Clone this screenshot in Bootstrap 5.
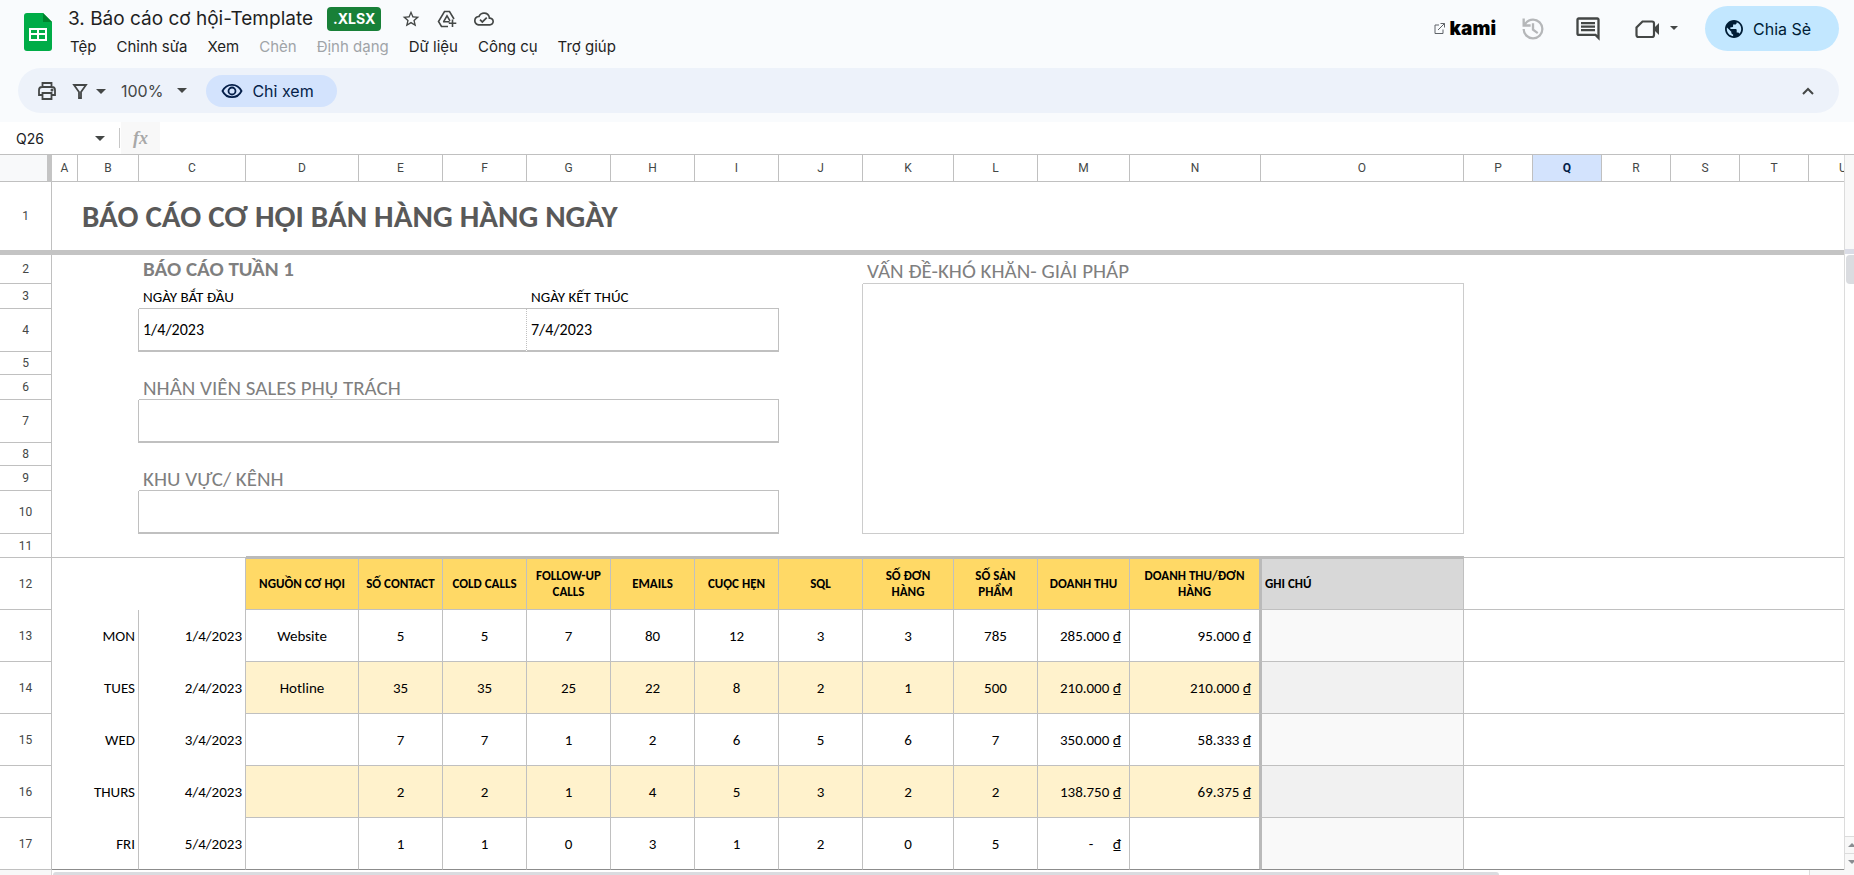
<!DOCTYPE html>
<html lang="vi">
<head>
<meta charset="utf-8">
<meta name="viewport" content="width=device-width, initial-scale=1">
<title>3. Báo cáo cơ hội-Template</title>
<link href="https://cdn.jsdelivr.net/npm/bootstrap@5.3.0/dist/css/bootstrap.min.css" rel="stylesheet">
<style>
  :root { --line: #c0c0c0; --icon: #444746; }
  body { font-family: Inter, "Open Sans", sans-serif; font-size: 15px; background: #f9fbfd; color: #1f1f1f; }
  svg { display: block; flex: none; }
  button { background: none; border: 0; padding: 0; color: inherit; }

  /* Title bar */
  .appbar { height: 60px; padding: 6px 15px 0 24px; }
  .doc-logo { margin: 7px 16px 0 0; }
  .doc-title { font-size: 19px; line-height: 24px; }
  .ext-badge { background: #188038; color: #fff; font-size: 14px; font-weight: 700; line-height: 24px; height: 24px; padding: 0 6px; border-radius: 4px; margin: 1px 20px 0 14px; }
  .menus { gap: 20px; padding-left: 2px; line-height: 20px; margin-top: 6px; }
  .menus button:disabled { color: #a0a4a8; }
  .head-tools { gap: 28px; }
  .kami-link { color: #000; font-size: 19px; font-weight: 900; line-height: 20px; gap: 5px; margin-right: -4px; }
  .share-btn { height: 45px; width: 134px; border-radius: 23px; background: #c2e7ff; color: #001d35; gap: 10px; font-size: 16px; padding-left: 20px; margin-left: -3px; }

  /* Toolbar */
  .toolbar { height: 45px; margin: 8px 15px 0 18px; padding: 0 24px 0 19px; border-radius: 23px; background: #edf2fa; color: var(--icon); }
  .filter-btn, .zoom-btn { margin-left: 15px; }
  .zoom-btn { font-size: 16px; gap: 14px; }
  .view-pill { height: 32px; width: 131px; border-radius: 16px; background: #d3e3fd; color: #041e49; font-size: 16px; gap: 9px; padding-left: 15px; margin-left: 19px; }
  .fx-row { height: 32px; margin-top: 9px; background: #fff; }
  .name-box { width: 119px; padding: 0 14px 0 16px; }
  .name-box input { width: 60px; border: 0; padding: 0; font-size: 14px; color: #202124; background: none; }
  .fx-mark { width: 40px; background: #f8f8f8; border-left: 1px solid #fff; color: #a8a8a8; font: italic 700 18px "Liberation Serif", serif; }
  .fx-sep { width: 1px; height: 20px; background: #c7c7c7; }
  .fx-input { border: 0; background: #fff; min-width: 0; }

  /* Sheet */
  .sheet-area { border-top: 1px solid var(--line); background: #fff; min-height: 0; }
  .grid { width: 100%; table-layout: fixed; border-collapse: separate; border-spacing: 0; font-family: Carlito, Calibri, Lato, sans-serif; font-size: 15px; line-height: 18px; color: #000; }
  .grid th, .grid td { padding: 0; border: 0 solid var(--line); vertical-align: middle; white-space: nowrap; }
  .grid thead th, .grid .rn { font: 400 12px/14px Roboto, "Liberation Sans", sans-serif; color: #444746; text-align: center; border-width: 0 1px 1px 0; }
  .grid thead th.corner { background: #f8f9fa; border-right: 5px solid #c4c4c4; }
  .grid thead th.picked { background: #d3e3fd; color: #041e49; font-weight: 700; }
  .grid thead th.cut { text-align: left; padding-left: 30px; overflow: hidden; border-right: 0; }
  .grid .freeze td { height: 5px; background: #c4c4c4; }
  .grid .r1 .rn { border-bottom: 0; }
  .grid .sheet-title { font-size: 31px; line-height: 36px; font-weight: 700; color: #595959; padding-left: 4px; }
  .grid .sec { font-size: 21px; line-height: 22px; color: #7f7f7f; padding-left: 4px; vertical-align: bottom; }
  .grid .high { line-height: 24px; }
  .grid .wk { font-weight: 700; vertical-align: top; line-height: 28px; }
  .grid .lbl { padding-left: 4px; vertical-align: bottom; line-height: 22px; }
  .grid .rb { border-right-width: 1px; }
  .grid .bb { border-bottom-width: 1px; }
  .grid .box { border-right-width: 1px; border-bottom-width: 2px; padding-left: 4px; font-size: 16px; }
  .grid .box.dash { border-right-style: dotted; }
  .grid .notes { border-color: #cccccc; border-width: 0 1px 1px 0; }
  .grid .lite { border-color: #cccccc; }
  .grid .cap3 { border-bottom: 2px solid #bababa; }
  .grid .r12 .hd { background: #ffd966; font-size: 13px; line-height: 16px; font-weight: 700; text-align: center; border-width: 1px 1px 1px 0; border-top-color: #bababa; white-space: normal; }
  .grid .r12 .note-hd { background: #d8d8d8; text-align: left; padding-left: 3px; }
  .grid .day td { text-align: center; border-bottom-width: 1px; border-right-width: 1px; }
  .grid .day td.d, .grid .day td.dt { text-align: right; padding-right: 3px; border-bottom-width: 0; }
  .grid .day td.m { text-align: right; padding-right: 8px; }
  .grid .day td.nt { background: #f9f9f9; border-left: 1px solid #bababa; }
  .grid .alt td { background: #fff2cc; }
  .grid .alt td.d, .grid .alt td.dt, .grid .alt td.rest { background: #fff; }
  .grid .day.alt td.nt { background: #f1f1f1; }
  .grid td.rest, .grid .day td.rest { border-right: 0; border-bottom-width: 1px; }
  .grid .r12 .hd.thick, .grid .day td.thick { border-right: 2px solid #bababa; }
  .grid .r12 .hd.note-hd { border-left: 1px solid #bababa; background: #d8d8d8; text-align: left; padding-left: 3px; }
  .grid .last td, .grid .day.last td.d, .grid .day.last td.dt { border-bottom: 1px solid #8c8c8c; }
  .h23 { height: 23px; } .h24 { height: 24px; } .h25 { height: 25px; } .h27 { height: 27px; }
  .h29 { height: 29px; } .h43 { height: 43px; } .h52 { height: 52px; } .h68 { height: 68px; }

  /* Scroll bars */
  .vscroll { width: 10px; border-left: 1px solid #dcdcdc; background: #fff; }
  .vscroll .top-pad { height: 94px; background: #f8f8f8; }
  .vscroll .grip { height: 5px; background: #dadce6; }
  .vscroll .thumb { height: 29px; margin: 1px 0 0 1px; border-radius: 4px 0 0 4px; background: #dadce0; }
  .vscroll button { height: 17px; border-top: 1px solid #dcdcdc; background: #f8f8f8; padding-left: 3px; }
  .hscroll { height: 5px; background: #fff; }
  .hscroll .pad { width: 52px; background: #f8f8f8; border-right: 1px solid #d9d9d9; }
  .hscroll .thumb { width: 78%; height: 3px; margin: 2px 0 0 1px; border-radius: 4px 4px 0 0; background: #dadce0; }
  .hscroll .ends { width: 45px; border-left: 1px solid #dcdcdc; background: #f8f8f8; }
</style>
</head>
<body class="vh-100 d-flex flex-column overflow-hidden">

<header class="appbar d-flex flex-shrink-0">
  <svg class="doc-logo" width="28" height="38" viewBox="0 0 28 38" aria-hidden="true">
    <path d="M3 0h16l9 9v26a3 3 0 0 1-3 3H3a3 3 0 0 1-3-3V3a3 3 0 0 1 3-3z" fill="#00ac47"/>
    <path d="M19 0l9 9h-9z" fill="#00832d"/>
    <path d="M5 15h18v13H5zM7 17v3h6v-3zM15 17v3h6v-3zM7 22v4h6v-4zM15 22v4h6v-4z" fill="#fff" fill-rule="evenodd"/>
  </svg>
  <div class="d-flex flex-column">
    <div class="d-flex align-items-center">
      <span class="doc-title">3. Báo cáo cơ hội-Template</span>
      <span class="ext-badge">.XLSX</span>
      <button type="button" aria-label="Gắn dấu sao"><svg width="20" height="20" viewBox="0 0 24 24" fill="#444746"><path d="M22 9.240l-7.190-.620L12 2 9.190 8.630 2 9.240l5.460 4.730L5.820 21 12 17.270 18.180 21l-1.630-7.030L22 9.240zM12 15.400l-3.760 2.270 1-4.280-3.320-2.880 4.380-.380L12 6.100l1.710 4.040 4.380.380-3.320 2.880 1 4.280L12 15.400z"/></svg></button>
      <button type="button" class="ms-3" aria-label="Thêm vào Drive"><svg width="20" height="20" viewBox="0 0 20 20" fill="none" stroke="#444746" stroke-width="1.600"><path d="M11 17.500H4.500L1.500 12.500 7.500 2.500h5l4.500 7.500"/><path d="M6.500 12.800L10 6.800l3 5"/><path d="M6 12.800h6.500M15.500 10.500v7.500M11.800 14.300h7.500"/></svg></button>
      <button type="button" class="ms-3" aria-label="Trạng thái tài liệu"><svg width="22" height="20" viewBox="0 0 24 24" fill="#444746"><path d="M19.350 10.040A7.490 7.490 0 0 0 12 4C9.110 4 6.600 5.640 5.350 8.040A5.994 5.994 0 0 0 0 14c0 3.310 2.690 6 6 6h13c2.760 0 5-2.240 5-5 0-2.640-2.050-4.780-4.650-4.960zM19 18H6c-2.210 0-4-1.790-4-4s1.790-4 4-4h.710A5.500 5.500 0 0 1 17.500 11.500v.500H19c1.660 0 3 1.340 3 3s-1.340 3-3 3zm-9-3.820l-2.090-2.090L6.500 13.500 10 17l6.010-6.010-1.410-1.410z"/></svg></button>
    </div>
    <nav class="menus d-flex" aria-label="Menu">
      <button type="button">Tệp</button>
      <button type="button">Chỉnh sửa</button>
      <button type="button">Xem</button>
      <button type="button" disabled>Chèn</button>
      <button type="button" disabled>Định dạng</button>
      <button type="button">Dữ liệu</button>
      <button type="button">Công cụ</button>
      <button type="button">Trợ giúp</button>
    </nav>
  </div>
  <div class="head-tools ms-auto d-flex align-items-center align-self-start">
    <a href="#" class="kami-link d-flex align-items-center text-decoration-none">
      <svg width="11" height="11" viewBox="0 0 11 11" fill="none" stroke="#5f6368"><path d="M5 2H1v8.500h8V6.500M6.500.5h4v4M10.500.5L4 7"/></svg>kami</a>
    <button type="button" aria-label="Lịch sử phiên bản"><svg width="26" height="28" viewBox="1 0 22 24" fill="#b5b7b9"><path d="M12 3a9 9 0 0 0-7 3.350V3H3v7h7V8H6.250A7 7 0 1 1 5 12H3a9 9 0 1 0 9-9zm-1 4v6l4.500 3.200 1.100-1.500L13 12V7z"/></svg></button>
    <button type="button" aria-label="Nhận xét"><svg width="28" height="28" viewBox="0 0 24 24" fill="#444746"><path d="M21.990 4c0-1.100-.890-2-1.990-2H4c-1.100 0-2 .9-2 2v12c0 1.100.9 2 2 2h14l4 4-.010-18zM20 4v13.170L18.830 16H4V4h16zM6 12h12v2H6zm0-3h12v2H6zm0-3h12v2H6z"/></svg></button>
    <button type="button" class="d-flex align-items-center ps-1" aria-label="Cuộc gọi"><svg width="26" height="24" viewBox="0 0 26 24"><path d="M8.500 4.500H18a2 2 0 0 1 2 2V18a2 2 0 0 1-2 2H4.500a2 2 0 0 1-2-2v-7.500z" fill="none" stroke="#444746" stroke-width="2.200"/><path d="M20 11l5-5v12l-5-5z" fill="#444746"/></svg><svg class="ms-2" width="12" height="16" viewBox="-1 0 12 16"><path d="M1 5h8L5 9z" fill="#444746"/></svg></button>
    <button type="button" class="share-btn d-flex align-items-center"><svg width="18" height="18" viewBox="2 2 20 20" fill="#001d35"><path d="M12 2C6.480 2 2 6.480 2 12s4.480 10 10 10 10-4.480 10-10S17.520 2 12 2zm-1 17.930c-3.950-.490-7-3.850-7-7.930 0-.620.080-1.210.210-1.790L9 15v1c0 1.100.9 2 2 2v1.930zm6.900-2.540c-.260-.810-1-1.390-1.900-1.390h-1v-3c0-.550-.450-1-1-1H8v-2h2c.550 0 1-.450 1-1V7h2c1.100 0 2-.9 2-2v-.410c2.930 1.190 5 4.060 5 7.410 0 2.080-.8 3.970-2.100 5.390z"/></svg>Chia Sẻ</button>
  </div>
</header>

<div class="toolbar d-flex align-items-center flex-shrink-0" role="toolbar" aria-label="Thanh công cụ">
  <button type="button" aria-label="In"><svg width="20" height="20" viewBox="0 0 20 20" fill="none" stroke="#444746" stroke-width="1.800"><path d="M5.500 6V2h9v4M5.500 14H2V9a3 3 0 0 1 3-3h10a3 3 0 0 1 3 3v5h-3.500M5.500 12h9v6h-9z"/><circle cx="15" cy="9" r=".6"/></svg></button>
  <button type="button" class="filter-btn d-flex align-items-center" aria-label="Bộ lọc"><svg width="16" height="16" viewBox="0 0 16 16" fill="none" stroke="#444746" stroke-width="1.800"><path d="M2 2h12L9 9v6H7V9z"/></svg><svg class="ms-2" width="10" height="16" viewBox="0 0 10 16"><path d="M0 6h10L5 11z" fill="#444746"/></svg></button>
  <button type="button" class="zoom-btn d-flex align-items-center">100%<svg width="10" height="16" viewBox="0 0 10 16"><path d="M0 5h10L5 10z" fill="#444746"/></svg></button>
  <button type="button" class="view-pill d-flex align-items-center"><svg width="22" height="20" viewBox="0 0 22 20" fill="none" stroke="#041e49" stroke-width="1.800"><path d="M1.500 10C3.500 6 7 3.800 11 3.800S18.500 6 20.500 10C18.500 14 15 16.200 11 16.200S3.500 14 1.500 10z"/><circle cx="11" cy="10" r="3.500"/></svg>Chỉ xem</button>
  <button type="button" class="ms-auto" aria-label="Ẩn các trình đơn"><svg width="14" height="14" viewBox="0 0 14 14" fill="none" stroke="#444746" stroke-width="2"><path d="M2 10l5-5 5 5"/></svg></button>
</div>

<div class="fx-row d-flex align-items-center flex-shrink-0">
  <div class="name-box d-flex align-items-center justify-content-between">
    <input type="text" value="Q26" aria-label="Hộp tên">
    <svg width="10" height="16" viewBox="0 0 10 16"><path d="M0 6h10L5 11z" fill="#444746"/></svg>
  </div>
  <span class="fx-sep"></span>
  <label for="formula" class="fx-mark align-self-stretch d-flex align-items-center justify-content-center">fx</label>
  <input id="formula" type="text" class="fx-input flex-grow-1 align-self-stretch" readonly>
</div>

<main class="sheet-area d-flex flex-grow-1">
  <div class="flex-grow-1 overflow-hidden">
    <table class="grid">
      <colgroup>
        <col style="width:52px"><col style="width:26px"><col style="width:61px"><col style="width:107px"><col style="width:113px">
        <col style="width:84px"><col style="width:84px"><col style="width:84px"><col style="width:84px"><col style="width:84px"><col style="width:84px">
        <col style="width:91px"><col style="width:84px"><col style="width:92px"><col style="width:131px"><col style="width:203px">
        <col style="width:69px"><col style="width:69px"><col style="width:69px"><col style="width:69px"><col style="width:69px"><col>
      </colgroup>
      <thead>
        <tr class="h27"><th class="corner"></th><th>A</th><th>B</th><th>C</th><th>D</th><th>E</th><th>F</th><th>G</th><th>H</th><th>I</th><th>J</th><th>K</th><th>L</th><th>M</th><th>N</th><th>O</th><th>P</th><th class="picked">Q</th><th>R</th><th>S</th><th>T</th><th class="cut">U</th></tr>
      </thead>
      <tbody>
        <tr class="h68 r1"><th class="rn">1</th><td></td><td colspan="20" class="sheet-title">BÁO CÁO CƠ HỘI BÁN HÀNG HÀNG NGÀY</td></tr>
        <tr class="freeze"><td colspan="22"></td></tr>
        <tr class="h29"><th class="rn">2</th><td colspan="2"></td><td colspan="8" class="sec wk">BÁO CÁO TUẦN 1</td><td colspan="5" class="sec high bb lite">VẤN ĐỀ-KHÓ KHĂN- GIẢI PHÁP</td><td colspan="6"></td></tr>
        <tr class="h25"><th class="rn">3</th><td colspan="2"></td><td colspan="4" class="lbl bb">NGÀY BẮT ĐẦU</td><td colspan="3" class="lbl bb">NGÀY KẾT THÚC</td><td class="rb lite"></td><td colspan="5" rowspan="8" class="notes"></td><td colspan="6"></td></tr>
        <tr class="h43"><th class="rn">4</th><td colspan="2" class="rb"></td><td colspan="4" class="box dash">1/4/2023</td><td colspan="3" class="box">7/4/2023</td><td class="rb lite"></td><td colspan="6"></td></tr>
        <tr class="h23"><th class="rn">5</th><td colspan="9"></td><td class="rb lite"></td><td colspan="6"></td></tr>
        <tr class="h25"><th class="rn">6</th><td colspan="2"></td><td colspan="7" class="sec bb">NHÂN VIÊN SALES PHỤ TRÁCH</td><td class="rb lite"></td><td colspan="6"></td></tr>
        <tr class="h43"><th class="rn">7</th><td colspan="2" class="rb"></td><td colspan="7" class="box"></td><td class="rb lite"></td><td colspan="6"></td></tr>
        <tr class="h23"><th class="rn">8</th><td colspan="9"></td><td class="rb lite"></td><td colspan="6"></td></tr>
        <tr class="h25"><th class="rn">9</th><td colspan="2"></td><td colspan="7" class="sec bb">KHU VỰC/ KÊNH</td><td class="rb lite"></td><td colspan="6"></td></tr>
        <tr class="h43"><th class="rn">10</th><td colspan="2" class="rb"></td><td colspan="7" class="box"></td><td class="rb lite"></td><td colspan="6"></td></tr>
        <tr class="h24"><th class="rn">11</th><td colspan="3" class="bb"></td><td colspan="12" class="cap3"></td><td colspan="6" class="rest"></td></tr>
        <tr class="h52 r12"><th class="rn">12</th><td colspan="3" class="rb"></td><th class="hd">NGUỒN CƠ HỘI</th><th class="hd">SỐ CONTACT</th><th class="hd">COLD CALLS</th><th class="hd">FOLLOW-UP CALLS</th><th class="hd">EMAILS</th><th class="hd">CUỘC HẸN</th><th class="hd">SQL</th><th class="hd">SỐ ĐƠN<br>HÀNG</th><th class="hd">SỐ SẢN<br>PHẨM</th><th class="hd">DOANH THU</th><th class="hd thick">DOANH THU/ĐƠN<br>HÀNG</th><th class="hd note-hd">GHI CHÚ</th><td colspan="6" class="rest"></td></tr>
        <tr class="h52 day"><th class="rn">13</th><td colspan="2" class="d">MON</td><td class="dt">1/4/2023</td><td>Website</td><td>5</td><td>5</td><td>7</td><td>80</td><td>12</td><td>3</td><td>3</td><td>785</td><td class="m">285.000 ₫</td><td class="m thick">95.000 ₫</td><td class="nt"></td><td colspan="6" class="rest"></td></tr>
        <tr class="h52 day alt"><th class="rn">14</th><td colspan="2" class="d">TUES</td><td class="dt">2/4/2023</td><td>Hotline</td><td>35</td><td>35</td><td>25</td><td>22</td><td>8</td><td>2</td><td>1</td><td>500</td><td class="m">210.000 ₫</td><td class="m thick">210.000 ₫</td><td class="nt"></td><td colspan="6" class="rest"></td></tr>
        <tr class="h52 day"><th class="rn">15</th><td colspan="2" class="d">WED</td><td class="dt">3/4/2023</td><td></td><td>7</td><td>7</td><td>1</td><td>2</td><td>6</td><td>5</td><td>6</td><td>7</td><td class="m">350.000 ₫</td><td class="m thick">58.333 ₫</td><td class="nt"></td><td colspan="6" class="rest"></td></tr>
        <tr class="h52 day alt"><th class="rn">16</th><td colspan="2" class="d">THURS</td><td class="dt">4/4/2023</td><td></td><td>2</td><td>2</td><td>1</td><td>4</td><td>5</td><td>3</td><td>2</td><td>2</td><td class="m">138.750 ₫</td><td class="m thick">69.375 ₫</td><td class="nt"></td><td colspan="6" class="rest"></td></tr>
        <tr class="h52 day last"><th class="rn">17</th><td colspan="2" class="d">FRI</td><td class="dt">5/4/2023</td><td></td><td>1</td><td>1</td><td>0</td><td>3</td><td>1</td><td>2</td><td>0</td><td>5</td><td class="m"><span class="me-3">-</span> ₫</td><td class="m thick"></td><td class="nt"></td><td colspan="6" class="rest"></td></tr>
      </tbody>
    </table>
  </div>
  <div class="vscroll d-flex flex-column flex-shrink-0">
    <div class="top-pad"></div><div class="grip"></div><div class="thumb"></div>
    <button type="button" class="mt-auto" aria-label="Cuộn lên"><svg width="6" height="4" viewBox="0 0 6 4"><path d="M0 4l4-4 4 4z" fill="#8a8d91"/></svg></button>
    <button type="button" aria-label="Cuộn xuống"><svg width="6" height="4" viewBox="0 0 6 4"><path d="M0 0h8L4 4z" fill="#8a8d91"/></svg></button>
  </div>
</main>
<div class="hscroll d-flex flex-shrink-0"><div class="pad"></div><div class="thumb"></div><div class="ends ms-auto"></div></div>

<script src="https://cdn.jsdelivr.net/npm/bootstrap@5.3.0/dist/js/bootstrap.bundle.min.js"></script>
</body>
</html>
